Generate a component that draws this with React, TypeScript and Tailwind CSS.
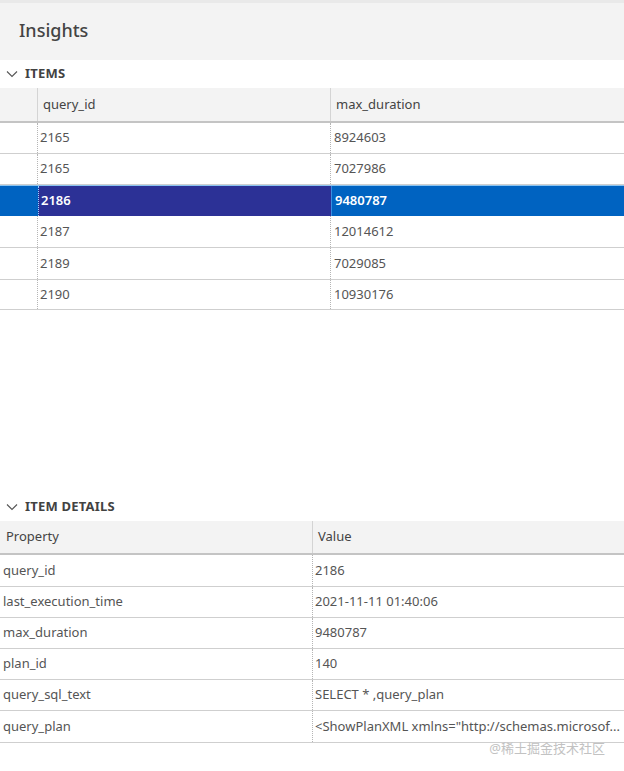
import React from "react";

const items = [
	{ id: "2165", dur: "8924603", h: "h-[31px]" },
	{ id: "2165", dur: "7027986", h: "h-[31px]" },
	{ id: "2186", dur: "9480787", h: "h-[31px]", selected: true },
	{ id: "2187", dur: "12014612", h: "h-[32px]" },
	{ id: "2189", dur: "7029085", h: "h-[32px]" },
	{ id: "2190", dur: "10930176", h: "h-[30px]" },
];

const details = [
	["query_id", "2186", "h-[32px]"],
	["last_execution_time", "2021-11-11 01:40:06", "h-[31px]"],
	["max_duration", "9480787", "h-[31px]"],
	["plan_id", "140", "h-[31px]"],
	["query_sql_text", "SELECT * ,query_plan", "h-[31px]"],
	["query_plan", '<ShowPlanXML xmlns="http://schemas.microsof...', "h-[32px]"],
];

function Chevron() {
	return (
		<svg width="12" height="8" viewBox="0 0 12 8" className="text-[#555]">
			<path d="M1 1.5 L6 6.5 L11 1.5" fill="none" stroke="currentColor" strokeWidth="1.1" />
		</svg>
	);
}

function SectionTitle({ label }: { label: string }) {
	return (
		<div className="flex items-center h-[28px] pl-[6px] gap-[7px]">
			<Chevron />
			<span className="text-[13px] font-bold text-[#424242] tracking-[0.2px]">{label}</span>
		</div>
	);
}

export default function App() {
	return (
		<div
			className="w-[624px] h-[771px] bg-white text-[13px] text-[#555] overflow-hidden"
			style={{ fontFamily: '"Noto Sans", "Open Sans", "Noto Sans CJK SC", sans-serif' }}
		>
			<div className="h-[60px] bg-[#f3f3f3] border-t-[3px] border-[#e9e9e9] flex items-center pl-[19px]">
				<h1 className="text-[18px] font-medium text-[#444] pb-[2px]">Insights</h1>
			</div>

			<SectionTitle label="ITEMS" />
			<div>
				<div className="flex h-[35px] bg-[#f3f3f3] border-b-[2px] border-[#c4c4c4] text-[#444]">
					<div className="w-[38px] border-r border-[#d4d4d4]" />
					<div className="w-[293px] border-r border-[#d4d4d4] pl-[5px] flex items-center">query_id</div>
					<div className="flex-1 pl-[5px] flex items-center">max_duration</div>
				</div>
				{items.map((r, i) =>
					r.selected ? (
						<div key={i} className={`flex ${r.h} border-t border-[#8cc4f0] text-white font-semibold`}>
							<div className="w-[38px] bg-[#0063c1]" />
							<div className="w-[293px] bg-[#2c3196] border-l border-dotted border-[#9fd0ff] pl-[2px] flex items-center">
								{r.id}
							</div>
							<div className="flex-1 bg-[#0063c1] border-l border-[#3b8ee0] pl-[3px] flex items-center">{r.dur}</div>
						</div>
					) : (
						<div key={i} className={`flex ${r.h} border-b border-[#cfcfcf]`}>
							<div className="w-[38px] border-r border-dotted border-[#b5b5b5]" />
							<div className="w-[293px] border-r border-dotted border-[#b5b5b5] pl-[2px] flex items-center">{r.id}</div>
							<div className="flex-1 pl-[3px] flex items-center">{r.dur}</div>
						</div>
					)
				)}
			</div>

			<div className="h-[183px]" />

			<SectionTitle label="ITEM DETAILS" />
			<div>
				<div className="flex h-[34px] bg-[#f3f3f3] border-b-[2px] border-[#c4c4c4] text-[#444]">
					<div className="w-[313px] border-r border-[#d4d4d4] pl-[6px] flex items-center">Property</div>
					<div className="flex-1 pl-[5px] flex items-center">Value</div>
				</div>
				{details.map(([k, v, h]) => (
					<div key={k} className={`flex ${h} border-b border-[#cfcfcf]`}>
						<div className="w-[313px] border-r border-dotted border-[#b5b5b5] pl-[3px] flex items-center">{k}</div>
						<div className="flex-1 pl-[2px] flex items-center whitespace-nowrap overflow-hidden">{v}</div>
					</div>
				))}
			</div>
			<div className="flex justify-end pr-[19px] -mt-[4px]">
				<span className="text-[13px] text-[#c2c2c2]">@稀土掘金技术社区</span>
			</div>
		</div>
	);
}
